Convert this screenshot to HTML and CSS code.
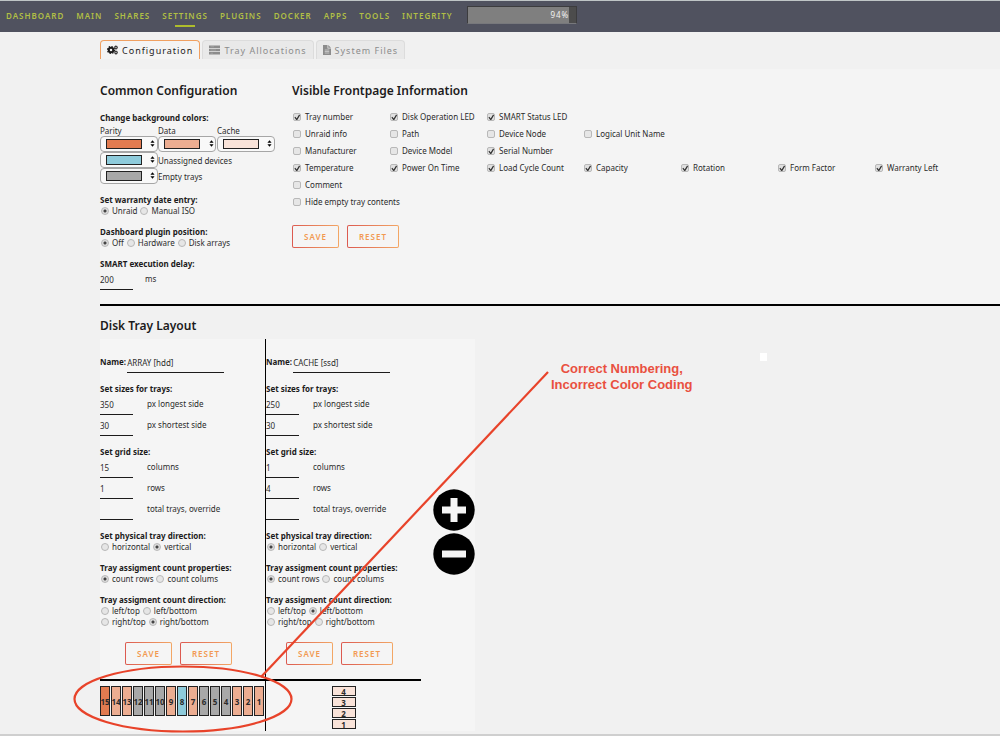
FILE: index.html
```html
<!DOCTYPE html>
<html lang="en">

<head>
    <meta charset="UTF-8" />
    <meta name="viewport" content="width=device-width, initial-scale=1.0" />
    <title>Disk Location</title>
    <link rel="stylesheet" href="styles.css">
</head>

<body>

    <!-- Navbar -->
    <header class="topbar">
        <nav>
            <a href="#">Dashboard</a>
            <a href="#">Main</a>
            <a href="#">Shares</a>
            <a href="#" class="active">Settings</a>
            <a href="#">Plugins</a>
            <a href="#">Docker</a>
            <a href="#">Apps</a>
            <a href="#">Tools</a>
            <a href="#">Integrity</a>
        </nav>
        <div class="usage"><div class="usage-fill">94%</div></div>
    </header>

    <main>
        <!-- Tabs -->
        <div class="tabs">
            <button type="button" class="tab current">
                <svg class="tab-icon" viewBox="0 0 22 20">
                    <circle cx="8" cy="10" r="4.5" fill="none" stroke="currentColor" stroke-width="4" />
                    <circle cx="8" cy="10" r="7" fill="none" stroke="currentColor" stroke-width="2.4" stroke-dasharray="2.8 2.7" />
                    <circle cx="18" cy="5" r="2.2" fill="none" stroke="currentColor" stroke-width="2" />
                    <circle cx="18" cy="5" r="3.6" fill="none" stroke="currentColor" stroke-width="1.4" stroke-dasharray="1.6 1.2" />
                    <circle cx="18" cy="15" r="2.2" fill="none" stroke="currentColor" stroke-width="2" />
                    <circle cx="18" cy="15" r="3.6" fill="none" stroke="currentColor" stroke-width="1.4" stroke-dasharray="1.6 1.2" />
                </svg>
                Configuration
            </button>
            <button type="button" class="tab">
                <svg class="tab-icon" viewBox="0 0 22 20">
                    <path fill="currentColor" d="M0 1h22v5H0zM0 7.500h22v5H0zM0 14h22v5H0z" />
                    <path stroke="#b5b5b5" d="M3 3.500h7M3 10h11M3 16.500h5" />
                </svg>
                Tray Allocations
            </button>
            <button type="button" class="tab">
                <svg class="tab-icon file" viewBox="0 0 16 20">
                    <path fill="currentColor" d="M0 0h9v7h7v13H0zM10.500 0L16 5.500h-5.500z" />
                    <path stroke="#e9e9e9" stroke-width="1.200" d="M3.500 10h9M3.500 13h9M3.500 16h9" />
                </svg>
                System Files
            </button>
        </div>

        <!-- Common configuration -->
        <form class="config">
            <section class="common">
                <h2>Common Configuration</h2>
                <div class="group">
                    <b>Change background colors:</b>
                    <div class="colors">
                        <label for="parity">Parity</label>
                        <label for="data">Data</label>
                        <label for="cache">Cache</label>
                        <span class="picker"><input type="color" id="parity" value="#e27b50"><svg viewBox="0 0 6 10"><path d="M3 1l2.500 3h-5zM3 9L.5 6h5z" /></svg></span>
                        <span class="picker"><input type="color" id="data" value="#ecad91"><svg viewBox="0 0 6 10"><path d="M3 1l2.500 3h-5zM3 9L.5 6h5z" /></svg></span>
                        <span class="picker"><input type="color" id="cache" value="#f9e3d9"><svg viewBox="0 0 6 10"><path d="M3 1l2.500 3h-5zM3 9L.5 6h5z" /></svg></span>
                        <span class="picker"><input type="color" id="unassigned" value="#8ecbdb"><svg viewBox="0 0 6 10"><path d="M3 1l2.500 3h-5zM3 9L.5 6h5z" /></svg></span>
                        <label class="wide" for="unassigned">Unassigned devices</label>
                        <span class="picker"><input type="color" id="empty" value="#a8a8a8"><svg viewBox="0 0 6 10"><path d="M3 1l2.500 3h-5zM3 9L.5 6h5z" /></svg></span>
                        <label class="wide" for="empty">Empty trays</label>
                    </div>
                </div>
                <div class="group">
                    <b>Set warranty date entry:</b>
                    <div class="radios">
                        <label><input type="radio" name="warranty" checked>Unraid</label>
                        <label><input type="radio" name="warranty">Manual ISO</label>
                    </div>
                </div>
                <div class="group">
                    <b>Dashboard plugin position:</b>
                    <div class="radios">
                        <label><input type="radio" name="position" checked>Off</label>
                        <label><input type="radio" name="position">Hardware</label>
                        <label><input type="radio" name="position">Disk arrays</label>
                    </div>
                </div>
                <div class="group">
                    <b>SMART execution delay:</b>
                    <div class="field"><input type="text" id="delay" value="200"><label for="delay">ms</label></div>
                </div>
            </section>

            <section class="visible">
                <h2>Visible Frontpage Information</h2>
                <div class="checks">
                    <label class="first"><input type="checkbox" checked>Tray number</label>
                    <label><input type="checkbox" checked>Disk Operation LED</label>
                    <label><input type="checkbox" checked>SMART Status LED</label>
                    <label class="first"><input type="checkbox">Unraid info</label>
                    <label><input type="checkbox">Path</label>
                    <label><input type="checkbox">Device Node</label>
                    <label><input type="checkbox">Logical Unit Name</label>
                    <label class="first"><input type="checkbox">Manufacturer</label>
                    <label><input type="checkbox">Device Model</label>
                    <label><input type="checkbox" checked>Serial Number</label>
                    <label class="first"><input type="checkbox" checked>Temperature</label>
                    <label><input type="checkbox" checked>Power On Time</label>
                    <label><input type="checkbox" checked>Load Cycle Count</label>
                    <label><input type="checkbox" checked>Capacity</label>
                    <label><input type="checkbox" checked>Rotation</label>
                    <label><input type="checkbox" checked>Form Factor</label>
                    <label><input type="checkbox" checked>Warranty Left</label>
                    <label class="first"><input type="checkbox">Comment</label>
                    <label class="first"><input type="checkbox">Hide empty tray contents</label>
                </div>
                <div class="buttons">
                    <button type="submit">Save</button>
                    <button type="reset">Reset</button>
                </div>
            </section>
        </form>

        <!-- Disk tray layout -->
        <h2 class="layout-title">Disk Tray Layout</h2>
        <div class="layout">
            <div class="groups">
                <form class="disk-group">
                    <div class="name"><label for="name1">Name:</label><input type="text" id="name1" value="ARRAY [hdd]"></div>
                    <div class="group">
                        <b>Set sizes for trays:</b>
                        <div class="field"><input type="text" id="long1" value="350"><label for="long1">px longest side</label></div>
                        <div class="field"><input type="text" id="short1" value="30"><label for="short1">px shortest side</label></div>
                    </div>
                    <div class="group">
                        <b>Set grid size:</b>
                        <div class="field"><input type="text" id="cols1" value="15"><label for="cols1">columns</label></div>
                        <div class="field"><input type="text" id="rows1" value="1"><label for="rows1">rows</label></div>
                        <div class="field"><input type="text" id="total1"><label for="total1">total trays, override</label></div>
                    </div>
                    <div class="group">
                        <b>Set physical tray direction:</b>
                        <div class="radios">
                            <label><input type="radio" name="dir1">horizontal</label>
                            <label><input type="radio" name="dir1" checked>vertical</label>
                        </div>
                    </div>
                    <div class="group">
                        <b>Tray assigment count properties:</b>
                        <div class="radios">
                            <label><input type="radio" name="prop1" checked>count rows</label>
                            <label><input type="radio" name="prop1">count colums</label>
                        </div>
                    </div>
                    <div class="group">
                        <b>Tray assigment count direction:</b>
                        <div class="radios">
                            <label><input type="radio" name="count1">left/top</label>
                            <label><input type="radio" name="count1">left/bottom</label>
                        </div>
                        <div class="radios">
                            <label><input type="radio" name="count1">right/top</label>
                            <label><input type="radio" name="count1" checked>right/bottom</label>
                        </div>
                    </div>
                    <div class="buttons">
                        <button type="submit">Save</button>
                        <button type="reset">Reset</button>
                    </div>
                    <div class="trays vertical">
                        <span class="tray parity">15</span>
                        <span class="tray data">14</span>
                        <span class="tray data">13</span>
                        <span class="tray empty">12</span>
                        <span class="tray empty">11</span>
                        <span class="tray empty">10</span>
                        <span class="tray data">9</span>
                        <span class="tray unassigned">8</span>
                        <span class="tray data">7</span>
                        <span class="tray empty">6</span>
                        <span class="tray empty">5</span>
                        <span class="tray empty">4</span>
                        <span class="tray data">3</span>
                        <span class="tray data">2</span>
                        <span class="tray data">1</span>
                    </div>
                </form>

                <form class="disk-group">
                    <div class="name"><label for="name2">Name:</label><input type="text" id="name2" value="CACHE [ssd]"></div>
                    <div class="group">
                        <b>Set sizes for trays:</b>
                        <div class="field"><input type="text" id="long2" value="250"><label for="long2">px longest side</label></div>
                        <div class="field"><input type="text" id="short2" value="30"><label for="short2">px shortest side</label></div>
                    </div>
                    <div class="group">
                        <b>Set grid size:</b>
                        <div class="field"><input type="text" id="cols2" value="1"><label for="cols2">columns</label></div>
                        <div class="field"><input type="text" id="rows2" value="4"><label for="rows2">rows</label></div>
                        <div class="field"><input type="text" id="total2"><label for="total2">total trays, override</label></div>
                    </div>
                    <div class="group">
                        <b>Set physical tray direction:</b>
                        <div class="radios">
                            <label><input type="radio" name="dir2" checked>horizontal</label>
                            <label><input type="radio" name="dir2">vertical</label>
                        </div>
                    </div>
                    <div class="group">
                        <b>Tray assigment count properties:</b>
                        <div class="radios">
                            <label><input type="radio" name="prop2" checked>count rows</label>
                            <label><input type="radio" name="prop2">count colums</label>
                        </div>
                    </div>
                    <div class="group">
                        <b>Tray assigment count direction:</b>
                        <div class="radios">
                            <label><input type="radio" name="count2">left/top</label>
                            <label><input type="radio" name="count2" checked>left/bottom</label>
                        </div>
                        <div class="radios">
                            <label><input type="radio" name="count2">right/top</label>
                            <label><input type="radio" name="count2">right/bottom</label>
                        </div>
                    </div>
                    <div class="buttons">
                        <button type="submit">Save</button>
                        <button type="reset">Reset</button>
                    </div>
                    <div class="trays horizontal">
                        <span class="tray cache">4</span>
                        <span class="tray cache">3</span>
                        <span class="tray cache">2</span>
                        <span class="tray cache">1</span>
                    </div>
                </form>
            </div>

            <div class="add-remove">
                <button type="button" aria-label="Add group">
                    <svg viewBox="0 0 42 42"><circle cx="21" cy="21" r="20.700" /><path fill="#f5f5f5" d="M17.500 9h7v8.500H33v7h-8.500V33h-7v-8.500H9v-7h8.500z" /></svg>
                </button>
                <button type="button" aria-label="Remove group">
                    <svg viewBox="0 0 42 42"><circle cx="21" cy="21" r="20.700" /><path fill="#f5f5f5" d="M9 17.500h24v7H9z" /></svg>
                </button>
            </div>
        </div>
    </main>

    <footer></footer>

    <!-- Annotation drawn over the page -->
    <svg class="markup" width="1000" height="736" viewBox="0 0 1000 736">
        <path fill="#fff" d="M760 353h7v8h-7z" />
        <path d="M548 372L261 677" fill="none" stroke="#e8432a" stroke-width="2.200" />
        <ellipse cx="183" cy="699" rx="108.500" ry="32.500" fill="none" stroke="#e8432a" stroke-width="2.200" />
    </svg>
    <p class="note">Correct Numbering,<br>Incorrect Color Coding</p>

</body>

</html>
```
FILE: styles.css
```css
* {
    box-sizing: border-box;
}

body {
    position: relative;
    margin: 0;
    font-family: "Noto Sans", sans-serif;
    font-size: 8px;
    line-height: 11px;
    color: #2b2b2b;
    background: #f1f1f1;
}

input,
button {
    font: inherit;
    color: inherit;
    margin: 0;
    padding: 0;
}

/* Navbar */
.topbar {
    display: flex;
    align-items: flex-start;
    gap: 14px;
    height: 32px;
    padding-left: 6px;
    border-top: 1px solid #bfc5c6;
    background: #50525f;
}

nav {
    display: flex;
    gap: 12px;
    padding-top: 9px;
}

nav a {
    display: flex;
    flex-direction: column;
    align-items: center;
    color: #b0bf45;
    font-weight: 600;
    letter-spacing: 1px;
    text-decoration: none;
    text-transform: uppercase;
}

nav .active::after {
    content: "";
    width: 20px;
    height: 2px;
    margin-top: 4px;
    background: #aebd2c;
}

.usage {
    width: 110px;
    height: 18px;
    margin-top: 5px;
    border: 1px solid #3c3c3e;
    border-bottom-color: #77787c;
    background: #4c4c4c;
}

.usage-fill {
    width: 94%;
    height: 16px;
    line-height: 15px;
    text-align: right;
    letter-spacing: 1px;
    color: #f2f2f2;
    background: #7f7f7f;
}

main {
    padding-left: 100px;
}

/* Tabs */
.tabs {
    display: flex;
    gap: 2px;
    padding-top: 8px;
}

.tab {
    display: flex;
    align-items: center;
    gap: 4px;
    height: 19px;
    padding: 0 6px;
    border: 1px solid #dcdcdc;
    border-bottom: 0;
    border-radius: 4px 4px 0 0;
    background: #e9e9e9;
    color: #8c8c8c;
    font-size: 9px;
    letter-spacing: 1px;
}

.tab.current {
    border-color: #f0a061;
    background: #f4f4f4;
    color: #1c1b1b;
}

.tab-icon {
    width: 11px;
    height: 10px;
}

.tab-icon.file {
    width: 8px;
}

/* Configuration */
h2 {
    margin: 0;
    font-size: 12px;
    font-weight: 600;
    line-height: 18px;
    color: #1c1b1b;
}

.config {
    display: flex;
    margin-top: 10px;
    padding: 13px 0 14px;
    border-bottom: 2px solid #000;
    background: #f4f4f4;
}

.common {
    width: 192px;
}

.visible {
    flex: 1;
}

.group {
    margin-bottom: 10px;
}

.group b {
    display: block;
    color: #1c1b1b;
}

.common h2 {
    margin-bottom: 12px;
}

.colors {
    display: grid;
    grid-template-columns: 58px 59px 58px;
    align-items: center;
    padding-top: 2px;
}

.colors .wide {
    grid-column: span 2;
}

.picker {
    position: relative;
    height: 16px;
}

.picker input {
    appearance: none;
    display: block;
    width: 58px;
    height: 16px;
    padding: 2px 15px 2px 5px;
    border: 1px solid #a6a6a6;
    border-radius: 4px;
    background: #f9f9f9;
}

.picker input::-webkit-color-swatch-wrapper {
    padding: 0;
}

.picker input::-webkit-color-swatch {
    border: 1px solid #222;
    border-radius: 0;
}

.picker svg {
    position: absolute;
    top: 3px;
    right: 3px;
    width: 5px;
    height: 9px;
    pointer-events: none;
}

.radios {
    display: flex;
    gap: 2px;
}

.radios label,
.checks label {
    display: flex;
    align-items: center;
    white-space: nowrap;
}

input[type="radio"] {
    appearance: none;
    flex: none;
    width: 8px;
    height: 8px;
    margin: 0 3px 0 1px;
    border: 1px solid #b8b8b8;
    border-radius: 50%;
    background: #e6e6e6;
}

input[type="radio"]:checked {
    background: radial-gradient(#444 1px, #ddd 2px);
}

input[type="checkbox"] {
    appearance: none;
    flex: none;
    width: 8px;
    height: 8px;
    margin: 1px 4px 0 1px;
    border: 1px solid #b8b8b8;
    border-radius: 2px;
    background: #e6e6e6;
}

input[type="checkbox"]:checked {
    background: #e0e0e0 url("data:image/svg+xml,%3Csvg xmlns='http://www.w3.org/2000/svg' viewBox='0 0 8 8'%3E%3Cpath d='M1.500 4l2 2.500 3-5' fill='none' stroke='%23333' stroke-width='1.300'/%3E%3C/svg%3E") center / 7px no-repeat;
}

.field {
    display: flex;
    line-height: 20px;
}

.field input,
.name input {
    width: 33px;
    height: 21px;
    border: 0;
    border-bottom: 1px solid #1c1b1b;
    background: none;
}

.field label {
    margin-left: 14px;
}

.common .field label {
    margin-left: 12px;
}

.common .group:last-child {
    margin-bottom: 0;
}

.checks {
    display: grid;
    grid-template-columns: repeat(7, 97px);
    grid-auto-rows: 17px;
    margin-top: 8px;
}

.checks .first {
    grid-column-start: 1;
}

/* the long label runs past its column */
.checks .first:last-child {
    grid-column-end: span 2;
}

.buttons {
    display: flex;
    gap: 8px;
    margin-top: 15px;
}

.buttons button {
    height: 23px;
    padding: 0 11px;
    border: 1px solid transparent;
    border-radius: 2px;
    background: linear-gradient(#f5f5f5, #f5f5f5) padding-box, linear-gradient(90deg, #dc5a50, #f3a765) border-box;
    color: #f29a52;
    font-weight: 600;
    letter-spacing: 1px;
    text-transform: uppercase;
}

/* Disk tray layout */
.layout-title {
    padding: 11px 0 4px;
}

.layout {
    display: flex;
    width: max-content;
    background: #f5f5f5;
}

.groups {
    display: grid;
    grid-template-columns: 166px 155px;
}

.disk-group {
    padding-top: 13px;
}

.disk-group:first-child {
    border-right: 1px solid #000;
}

.name {
    display: flex;
    gap: 1px;
    margin-bottom: 10px;
    line-height: 20px;
}

.name label {
    font-weight: bold;
    color: #1c1b1b;
}

.name input {
    width: 97px;
}

.disk-group .buttons {
    justify-content: center;
    padding-right: 8px;
}

.trays {
    display: flex;
    gap: 2px;
    height: 52px;
    margin-top: 14px;
    padding-top: 5px;
    border-top: 2px solid #000;
}

.tray {
    display: flex;
    align-items: center;
    justify-content: center;
    border: 1px solid #222;
    font-weight: bold;
}

.vertical {
    gap: 1px;
}

.vertical .tray {
    width: 10px;
    height: 30px;
}

.horizontal {
    flex-direction: column;
    align-items: center;
    gap: 1px;
}

.horizontal .tray {
    width: 24px;
    height: 10px;
}

.parity {
    background: #e27b50;
}

.data {
    background: #ecad91;
}

.cache {
    background: #f9e3d9;
}

.unassigned {
    background: #8ecbdb;
}

.empty {
    background: #a8a8a8;
}

.add-remove {
    display: flex;
    flex-direction: column;
    justify-content: center;
    gap: 2px;
    padding: 0 0 6px 12px;
}

.add-remove button {
    border: 0;
    background: none;
}

.add-remove svg {
    display: block;
    width: 42px;
    height: 42px;
}

footer {
    height: 2px;
    margin-top: 3px;
    background: #cfcfcf;
}

/* Annotation */
.markup {
    position: absolute;
    top: 0;
    left: 0;
    pointer-events: none;
}

.note {
    position: absolute;
    top: 361px;
    left: 551px;
    margin: 0;
    font: bold 13px/16px "Liberation Sans", Arial, sans-serif;
    text-align: center;
    color: #e9503f;
}
```
